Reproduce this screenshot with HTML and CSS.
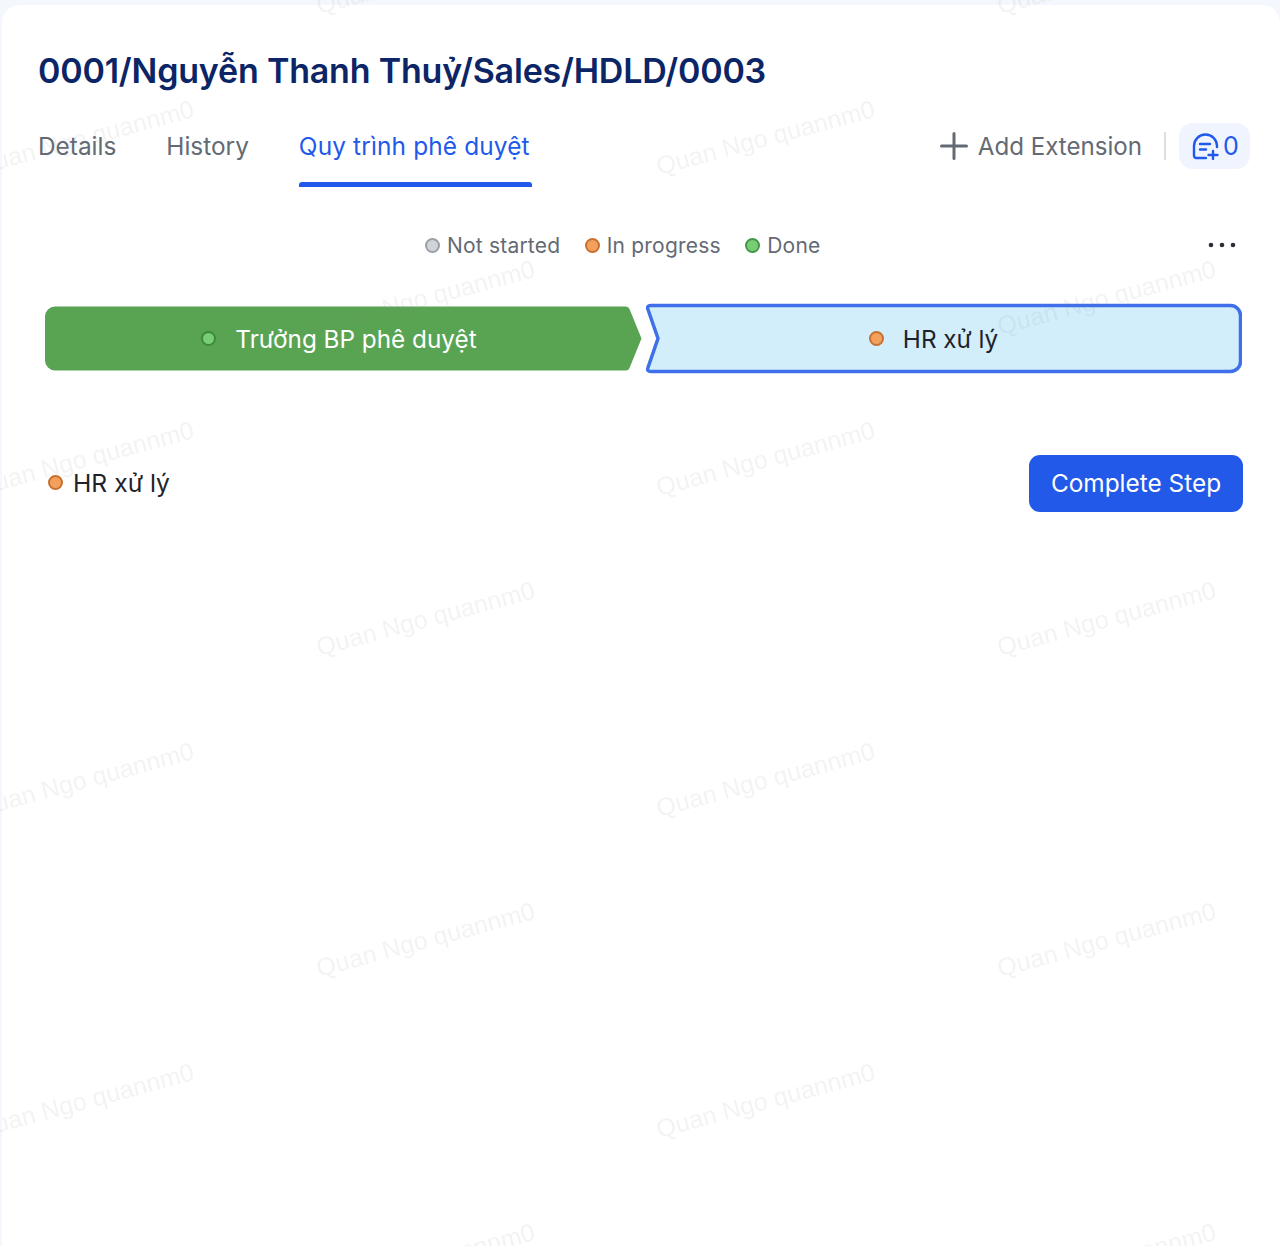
FILE: index.html
```html
<!DOCTYPE html>
<html lang="vi">
<head>
<meta charset="utf-8">
<title>0001/Nguyễn Thanh Thuỷ/Sales/HDLD/0003</title>
<link rel="stylesheet" href="styles.css">
</head>
<body>
<main class="card">
  <h1 class="title">0001/Nguyễn Thanh Thuỷ/Sales/HDLD/0003</h1>
  <div class="tabbar">
    <nav class="tabs">
      <a class="tab">Details</a>
      <a class="tab">History</a>
      <a class="tab tab-active">Quy trình phê duyệt</a>
    </nav>
    <div class="actions">
      <button class="add-ext">
        <svg class="icon-plus" viewBox="0 0 28 28" fill="none" stroke="currentColor" stroke-width="3" stroke-linecap="round"><path d="M14 1.500v25M1.500 14h25"/></svg>
        Add Extension
      </button>
      <span class="sep"></span>
      <button class="chip">
        <svg class="icon-comment" viewBox="0 0 27 27" fill="none" stroke="currentColor" stroke-width="2.400" stroke-linecap="round" stroke-linejoin="round"><path d="M14 25H4.500A2.500 2.500 0 0 1 2 22.500V13a11.500 11.500 0 0 1 23 0v1"/><path d="M8 11h10M8 16.500h6M21 18v8M16.500 22h9"/></svg>
        0
      </button>
    </div>
  </div>
  <div class="legend-row">
    <ul class="legend">
      <li class="legend-item"><i class="dot dot-grey"></i>Not started</li>
      <li class="legend-item"><i class="dot dot-orange"></i>In progress</li>
      <li class="legend-item"><i class="dot dot-green"></i>Done</li>
    </ul>
    <svg class="more" viewBox="0 0 28 6" fill="#2b2f38"><circle cx="3" cy="3" r="2.300"/><circle cx="14" cy="3" r="2.300"/><circle cx="25" cy="3" r="2.300"/></svg>
  </div>
  <div class="steps">
    <div class="step step-done">
      <svg class="step-bg" viewBox="0 0 597 65"><path fill="#59a453" d="M10 .5H581q2.500 0 3.500 2.500L596.500 32.500L584.500 62q-1 2.500-3.500 2.500H10A10 10 0 0 1 0 54.500V10.500A10 10 0 0 1 10 .5Z"/></svg>
      <i class="dot dot-green dot-on-green"></i><span class="step-label">Trưởng BP phê duyệt</span>
    </div>
    <div class="step step-current">
      <svg class="step-bg" viewBox="0 0 597 71"><path fill="#d1eefa" stroke="#3f6fe9" stroke-width="3.500" stroke-linejoin="round" d="M6 2.500H585.500a10 10 0 0 1 10 10V58.500a10 10 0 0 1-10 10H6Q1.500 68.500 3 64.500L13 35.500L3 6.500Q1.500 2.500 6 2.500Z"/></svg>
      <i class="dot dot-orange"></i><span class="step-label">HR xử lý</span>
    </div>
  </div>
  <div class="current-row">
    <div class="current-name"><i class="dot dot-orange"></i>HR xử lý</div>
    <button class="primary">Complete Step</button>
  </div>
</main>
<svg class="watermarks" width="1280" height="1246">
  <defs>
    <pattern id="wm" x="0" y="0" width="681" height="321" patternUnits="userSpaceOnUse">
      <g class="wm-text">
        <text transform="translate(-22 175) rotate(-15)">Quan Ngo quannm0</text>
        <text transform="translate(659 175) rotate(-15)">Quan Ngo quannm0</text>
        <text transform="translate(319 14) rotate(-15)">Quan Ngo quannm0</text>
        <text transform="translate(319 335) rotate(-15)">Quan Ngo quannm0</text>
        <text transform="translate(-362 335) rotate(-15)">Quan Ngo quannm0</text>
        <text transform="translate(-362 14) rotate(-15)">Quan Ngo quannm0</text>
      </g>
    </pattern>
  </defs>
  <rect width="1280" height="1246" fill="url(#wm)"/>
</svg>
</body>
</html>
```
FILE: styles.css
```css
* { box-sizing: border-box; }
html, body { margin: 0; height: 100%; }
body {
  position: relative;
  height: 1246px;
  overflow: hidden;
  background: #f4f7fd;
  font-family: Inter, "Noto Sans", sans-serif;
  color: #1f2329;
  padding: 5px 0 0 2px;
}
.card {
  height: 1300px;
  background: #fff;
  border-radius: 18px 18px 0 0;
  padding: 43px 30px 0 36px;
}
.title {
  margin: 0;
  font-size: 34px;
  line-height: 46px;
  font-weight: 600;
  letter-spacing: -.2px;
  color: #0b2566;
}
.tabbar {
  margin-top: 29px;
  display: flex;
  justify-content: space-between;
  align-items: flex-start;
}
.tabs { display: flex; gap: 50px; }
.tab {
  position: relative;
  display: block;
  height: 64px;
  padding-top: 7px;
  font-size: 24.4px;
  line-height: 32px;
  color: #646a73;
}
.tab-active { color: #2159ea; letter-spacing: .15px; }
.tab-active::after {
  content: "";
  position: absolute;
  left: 0;
  right: -2px;
  bottom: 0;
  height: 5px;
  border-radius: 3px 3px 0 0;
  background: #2159ea;
}
.actions { display: flex; align-items: center; height: 46px; }
.add-ext, .chip, .primary { font: inherit; border: 0; cursor: pointer; }
.add-ext {
  display: flex;
  align-items: center;
  gap: 10px;
  padding: 0;
  background: none;
  color: #646a73;
  font-size: 24.1px;
}
.icon-plus { width: 28px; height: 28px; }
.sep { width: 2px; height: 28px; background: #dcdfe4; margin: 0 13px 0 22px; }
.chip {
  display: flex;
  align-items: center;
  gap: 4px;
  width: 71px;
  height: 46px;
  padding-left: 13px;
  border-radius: 14px;
  background: #eff4fe;
  color: #2159ea;
  font-size: 25px;
}
.icon-comment { width: 27px; height: 27px; }
.legend-row {
  margin-top: 41px;
  display: flex;
  justify-content: space-between;
  align-items: center;
  padding: 0 14px 0 387px;
  height: 34px;
}
.legend { list-style: none; margin: 0; padding: 0; display: flex; gap: 24.5px; }
.legend-item {
  display: flex;
  align-items: center;
  gap: 7px;
  font-size: 21px;
  letter-spacing: .2px;
  color: #646a73;
}
.dot {
  flex: none;
  display: block;
  width: 15px;
  height: 15px;
  border-radius: 50%;
  border: 2px solid;
}
.dot-grey { background: #d0d3d8; border-color: #9a9fa8; }
.dot-orange { background: #f3a05d; border-color: #c9702f; }
.dot-green { background: #78ce75; border-color: #44964a; }
.more { width: 28px; height: 6px; }
.steps {
  margin-top: 41px;
  margin-left: 7px;
  display: flex;
  gap: 3px;
  align-items: center;
}
.step {
  position: relative;
  width: 597px;
  display: flex;
  align-items: center;
  justify-content: center;
  gap: 19px;
  font-size: 24.3px;
}
.step-done { height: 65px; color: #fff; padding-right: 9px; }
.step-current { height: 71px; color: #1f2329; padding-right: 20px; }
.step-bg { position: absolute; inset: 0; width: 100%; height: 100%; }
.step > .dot, .step-label { position: relative; }
.dot-on-green { border-color: #3c8a3c; }
.current-row {
  margin-top: 81px;
  margin-left: 10px;
  margin-right: 7px;
  display: flex;
  justify-content: space-between;
  align-items: center;
}
.current-name {
  display: flex;
  align-items: center;
  gap: 10px;
  padding-bottom: 2px;
  font-size: 24.7px;
}
.primary {
  width: 214px;
  height: 57px;
  padding-bottom: 2px;
  border-radius: 11px;
  background: #2359e9;
  color: #fff;
  font-size: 24.4px;
}
.watermarks { position: absolute; inset: 0; pointer-events: none; }
.wm-text {
  font-family: "Liberation Sans", Arial, sans-serif;
  font-size: 25px;
  fill: rgba(120, 120, 120, .09);
}
```
